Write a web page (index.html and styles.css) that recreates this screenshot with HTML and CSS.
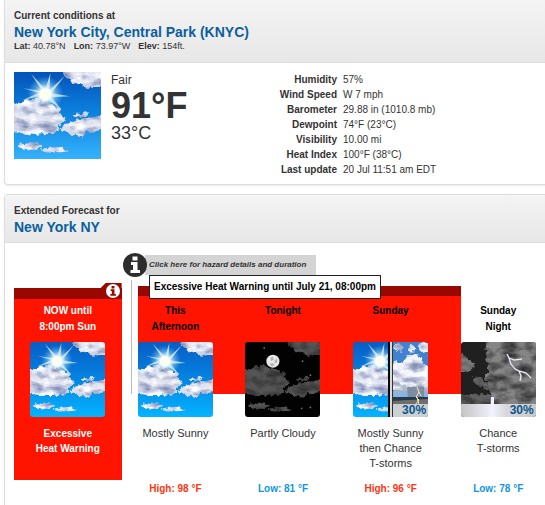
FILE: index.html
```html
<!DOCTYPE html>
<html lang="en">
<head>
<meta charset="utf-8">
<title>New York Weather Forecast</title>
<link rel="stylesheet" href="styles.css">
</head>
<body>
<svg class="defs" aria-hidden="true">
  <defs>
    <linearGradient id="sky" x1="0" y1="0" x2="0" y2="1">
      <stop offset="0" stop-color="#0353b8"/>
      <stop offset="0.45" stop-color="#0b7fdd"/>
      <stop offset="1" stop-color="#35b2fb"/>
    </linearGradient>
    <linearGradient id="sky-bright" x1="0" y1="0" x2="0" y2="1">
      <stop offset="0" stop-color="#0a5cc4"/>
      <stop offset="0.5" stop-color="#0385e3"/>
      <stop offset="1" stop-color="#04b4ff"/>
    </linearGradient>
    <linearGradient id="cloud-day" x1="0" y1="0" x2="0" y2="1">
      <stop offset="0" stop-color="#e2e8f6"/>
      <stop offset="0.5" stop-color="#dde2f0"/>
      <stop offset="0.85" stop-color="#d2d8ea"/>
      <stop offset="1" stop-color="#e4e8f4"/>
    </linearGradient>
    <radialGradient id="glow">
      <stop offset="0" stop-color="#fffff0"/>
      <stop offset="0.35" stop-color="#f2fbf0" stop-opacity="0.9"/>
      <stop offset="0.6" stop-color="#a9dcf5" stop-opacity="0.5"/>
      <stop offset="1" stop-color="#6dbdf0" stop-opacity="0"/>
    </radialGradient>
    <linearGradient id="mist" x1="0" x2="1">
      <stop offset="0" stop-color="#c4c4c4"/>
      <stop offset="0.42" stop-color="#f1f1fb"/>
      <stop offset="0.6" stop-color="#d8d8dc"/>
      <stop offset="1" stop-color="#c6c8ca"/>
    </linearGradient>
    <filter id="fluff" x="-5%" y="-5%" width="110%" height="110%" color-interpolation-filters="sRGB">
      <feTurbulence type="fractalNoise" baseFrequency="0.07 0.14" numOctaves="3" seed="4" result="n"/>
      <feTurbulence type="fractalNoise" baseFrequency="0.2" numOctaves="2" seed="9" result="edge"/>
      <feDisplacementMap in="SourceGraphic" in2="edge" scale="7" xChannelSelector="R" yChannelSelector="G" result="d"/>
      <feColorMatrix in="n" type="matrix" values="0 0 0 0 0.52  0 0 0 0 0.56  0 0 0 0 0.72  2.4 0 0 0 -0.95" result="s"/>
      <feComposite in="s" in2="d" operator="in" result="shade"/>
      <feColorMatrix in="n" type="matrix" values="0 0 0 0 1  0 0 0 0 1  0 0 0 0 1  0 3 0 0 -1.4" result="h"/>
      <feComposite in="h" in2="d" operator="in" result="light"/>
      <feMerge><feMergeNode in="d"/><feMergeNode in="shade"/><feMergeNode in="light"/></feMerge>
    </filter>
    <filter id="fluff-dark" x="-5%" y="-5%" width="110%" height="110%" color-interpolation-filters="sRGB">
      <feTurbulence type="fractalNoise" baseFrequency="0.07 0.12" numOctaves="3" seed="4" result="n"/>
      <feTurbulence type="fractalNoise" baseFrequency="0.2" numOctaves="2" seed="9" result="edge"/>
      <feDisplacementMap in="SourceGraphic" in2="edge" scale="7" xChannelSelector="R" yChannelSelector="G" result="d"/>
      <feColorMatrix in="n" type="matrix" values="0 0 0 0 0.18  0 0 0 0 0.18  0 0 0 0 0.18  2 0 0 0 -0.7" result="s"/>
      <feComposite in="s" in2="d" operator="in" result="shade"/>
      <feMerge><feMergeNode in="d"/><feMergeNode in="shade"/></feMerge>
    </filter>
    <g id="cloud-shapes">
      <path d="M48 0Q50 5 56 7Q59 13 65 12Q71 17 77 15Q82 17 88 14V-3H48Z"/>
      <path d="M-3 34Q3 33 5 30Q9 31 11 28Q16 24 20 28Q26 26 29 31Q35 30 39 33Q44 32 46 38L43 41Q50 42 50 48Q48 53 43 54Q46 60 39 60Q33 62 29 61Q20 63 14 61Q6 61 -3 58Z"/>
      <path d="M44 55Q49 54 53 51Q59 50 63 47Q69 49 73 45Q79 46 89 41V57Q81 58 78 60Q72 58 70 62Q65 66 61 62Q54 63 52 59Z"/>
      <path d="M59 43Q62 39 67 41Q70 37 74 40Q71 45 65 44Q62 46 59 43Z"/>
      <path d="M3 72Q8 69 14 71Q22 69 28 72Q26 75 21 76Q17 79 12 77Q6 77 3 72Z"/>
      <path d="M25 77Q31 75 37 75Q45 73 54 78Q47 80 41 79Q33 81 25 77Z"/>
    </g>
    <g id="sun">
      <circle cx="31" cy="22" r="18" fill="url(#glow)"/>
      <path d="M30 22L9 16L28 19L17 2L31 17L36 1L35 18L50 4L37 21L55 24L37 25L47 37L33 27L29 41L27 27L16 38L24 24L8 28L24 21Z" fill="#d7f1fb" opacity="0.8"/>
      <circle cx="31" cy="22" r="6" fill="#fffff1"/>
    </g>
    <symbol id="sunny" viewBox="0 0 86 86">
      <use href="#sun"/>
      <use href="#cloud-shapes" fill="url(#cloud-day)" filter="url(#fluff)"/>
    </symbol>
    <symbol id="info" viewBox="0 0 24 24">
      <circle cx="12" cy="12" r="12" class="info-disc"/>
      <path class="info-mark" d="M9.500 3.500h5v4h-5zM8 9h6.500v8H17v3H7.500v-3H10v-5H8z"/>
    </symbol>
  </defs>
</svg>

<section class="panel">
  <header class="panel-head panel-head-first">
    <p class="eyebrow">Current conditions at</p>
    <h2 class="title">New York City, Central Park (KNYC)</h2>
    <p class="coords"><span><b>Lat:</b> 40.78°N</span><span><b>Lon:</b> 73.97°W</span><span><b>Elev:</b> 154ft.</span></p>
  </header>
  <div class="current">
    <svg class="current-art" viewBox="0 0 86 86" role="img" aria-label="Fair">
      <rect width="86" height="86" fill="url(#sky)"/>
      <use href="#sunny" width="86" height="86"/>
    </svg>
    <div class="reading">
      <p class="sky">Fair</p>
      <p class="temp-f">91°F</p>
      <p class="temp-c">33°C</p>
    </div>
    <table class="details">
      <tr><th scope="row">Humidity</th><td>57%</td></tr>
      <tr><th scope="row">Wind Speed</th><td>W 7 mph</td></tr>
      <tr><th scope="row">Barometer</th><td>29.88 in (1010.8 mb)</td></tr>
      <tr><th scope="row">Dewpoint</th><td>74°F (23°C)</td></tr>
      <tr><th scope="row">Visibility</th><td>10.00 mi</td></tr>
      <tr><th scope="row">Heat Index</th><td>100°F (38°C)</td></tr>
      <tr><th scope="row">Last update</th><td>20 Jul 11:51 am EDT</td></tr>
    </table>
  </div>
</section>

<section class="panel panel-forecast">
  <header class="panel-head">
    <p class="eyebrow">Extended Forecast for</p>
    <h2 class="title">New York NY</h2>
  </header>
  <div class="hazard-bar">
    <a class="hazard-link" href="#hazards">
      <svg class="info-large"><use href="#info"/></svg>
      <span class="hazard-text">Click here for hazard details and duration</span>
    </a>
    <div class="tip" role="tooltip">Excessive Heat Warning until July 21, 08:00pm</div>
  </div>
  <div class="forecast">
    <div class="band"></div>
    <a class="period hazard" id="hazards" href="#hazards">
      <span class="tab"><svg class="info-small"><use href="#info"/></svg></span>
      <span class="name">NOW until<br>8:00pm Sun</span>
      <svg class="art" viewBox="0 0 86 86">
        <rect width="86" height="86" fill="url(#sky-bright)"/>
        <use href="#sunny" width="86" height="86"/>
      </svg>
      <span class="desc">Excessive<br>Heat Warning</span>
    </a>
    <div class="period p1">
      <h3 class="name">This<br>Afternoon</h3>
      <svg class="art" viewBox="0 0 86 86">
        <rect width="86" height="86" fill="url(#sky-bright)"/>
        <use href="#sunny" width="86" height="86"/>
      </svg>
      <p class="desc">Mostly Sunny</p>
      <p class="temp high">High: 98 °F</p>
    </div>
    <div class="period p2">
      <h3 class="name">Tonight</h3>
      <svg class="art" viewBox="0 0 86 86">
        <rect width="86" height="86" fill="#020202"/>
        <g fill="#777"><circle cx="22" cy="7" r="1"/><circle cx="66" cy="22" r="1"/><circle cx="75" cy="38" r="1"/><circle cx="65" cy="76" r="1"/><circle cx="75" cy="75" r="1"/></g>
        <circle cx="32" cy="22" r="7.500" fill="#e8e8e8"/>
        <path d="M29 18l3-1 1 3-3 2zM34 21l3-2v4l-3 2zM28 25l4-1 2 3-4 1z" fill="#b3b3b3"/>
        <use href="#cloud-shapes" fill="#555" filter="url(#fluff-dark)"/>
      </svg>
      <p class="desc">Partly Cloudy</p>
      <p class="temp low">Low: 81 °F</p>
    </div>
    <div class="period p3">
      <h3 class="name">Sunday</h3>
      <div class="art-wrap">
        <svg class="art" viewBox="0 0 75 75">
          <rect width="36" height="75" fill="url(#sky-bright)"/>
          <svg width="36" height="75" viewBox="0 0 36 75"><use href="#sunny" width="75" height="75"/></svg>
          <rect x="39" width="36" height="75" fill="#3f82cf"/>
          <g filter="url(#fluff)">
            <path fill="#f3f5fa" d="M38 25Q44 18 50 21Q52 11 61 13Q70 14 70 23Q77 22 78 30V49H38Z"/>
            <path fill="#dce5f3" d="M42 1Q49 2 52 7Q47 12 41 7ZM65 2Q74 -1 78 6Q76 14 68 9ZM56 4Q62 2 62 8Q59 11 55 8Z"/>
            <path fill="#aeb9c9" d="M38 43Q47 40 55 45Q66 42 78 45V50H38Z"/>
          </g>
          <rect x="39" y="49" width="36" height="6" fill="#8fb4dc"/>
          <path d="M54 45H71V57H55Z" fill="#758595" opacity="0.8"/>
          <path d="M39 55H75V59L57 58L39 60Z" fill="#233a50"/>
          <path d="M39 59L75 57V75H39Z" fill="#716d69"/>
          <path d="M64 45L66 50L63 55L66 58L62 63M66 50L68 54M64 55L66 63" fill="none" stroke="#ffe7b1" stroke-width="1"/>
          <rect x="35" width="2" height="75" fill="#080808"/>
          <rect x="37" width="2" height="75" fill="#d9d9d5"/>
          <rect x="39" width="1" height="75" fill="#333"/>
          <rect x="40" y="62" width="35" height="13" fill="#cbd0d3"/>
        </svg>
        <span class="chance">30%</span>
      </div>
      <p class="desc">Mostly Sunny<br>then Chance<br>T-storms</p>
      <p class="temp high">High: 96 °F</p>
    </div>
    <div class="period p4">
      <h3 class="name">Sunday<br>Night</h3>
      <div class="art-wrap">
        <svg class="art" viewBox="0 0 75 75">
          <rect width="75" height="75" fill="#202020"/>
          <g filter="url(#fluff-dark)">
            <path fill="#7a7a7a" d="M-3 13Q5 12 7 18Q14 20 12 27Q5 31 -3 30Z"/>
            <path fill="#858585" d="M24 -4Q27 4 23 7Q29 11 25 18Q29 26 26 30Q21 37 26 40Q19 46 29 50L34 63H80V-4Z"/>
            <path fill="#626262" d="M-4 56Q8 48 17 53Q25 49 31 55L42 64H-4ZM10 38Q14 32 21 36L26 44Q17 48 10 38Z"/>
          </g>
          <path d="M46 12L48 16L50 22L54 27L58 29L60 34L59 39M48 16L53 18L61 17M58 29L65 31L70 36" fill="none" stroke="#b4b4c4" stroke-width="2" opacity="0.6"/>
          <path d="M46 12L48 16L50 22L54 27L58 29L60 34L59 39M48 16L53 18L61 17M58 29L65 31L70 36" fill="none" stroke="#f4f4ff"/>
          <rect y="62" width="75" height="13" fill="url(#mist)"/>
          <path d="M30 55H33V75H29Z" fill="#f1f1ff"/>
        </svg>
        <span class="chance">30%</span>
      </div>
      <p class="desc">Chance<br>T-storms</p>
      <p class="temp low">Low: 78 °F</p>
    </div>
  </div>
</section>
</body>
</html>
```

FILE: styles.css
```css
* { box-sizing: border-box; }

body {
  margin: 0;
  overflow-x: hidden;
  background: #fff;
  color: #333;
  font-family: "Liberation Sans", Arial, sans-serif;
  font-size: 10px;
  line-height: 15px;
}

p, h2, h3 { margin: 0; font-size: inherit; }
a { color: inherit; text-decoration: none; }
.defs { position: absolute; width: 0; height: 0; }

.panel {
  margin: 0 -8px 9px 4px;
  border: 1px solid #ddd;
  border-radius: 4px;
  box-shadow: 0 1px 2px rgba(0, 0, 0, 0.08);
}
.panel:first-of-type { border-top: 0; border-radius: 0 0 4px 4px; }
.panel-forecast { margin-bottom: 0; border-bottom: 0; border-radius: 4px 4px 0 0; }

.panel-head {
  padding: 8px 9px 7px;
  border-bottom: 1px solid #ddd;
  background: linear-gradient(#f4f4f4, #e7e7e7);
}
.panel-head-first { padding-bottom: 9px; }
.eyebrow { font-weight: bold; line-height: 16px; }
.title { color: #0b5f9e; font-size: 14px; line-height: 16px; }
.coords { display: flex; gap: 8px; font-size: 9px; line-height: 13px; }

.current { display: flex; align-items: flex-start; padding: 9px 9px 7px; }
.current-art { width: 87px; height: 87px; }
.reading { width: 168px; margin-left: 10px; }
.sky { font-size: 12px; line-height: 16px; }
.temp-f { font-size: 36px; font-weight: bold; line-height: 36px; }
.temp-c { font-size: 18px; line-height: 18px; }

.details { border-collapse: collapse; }
.details th, .details td { padding: 0; line-height: 15px; }
.details th { width: 64px; padding-right: 6px; text-align: right; white-space: nowrap; }

.hazard-bar { position: relative; padding: 10px 0 3px 118px; }
.hazard-link { display: flex; align-items: center; width: max-content; }
.info-large { width: 24px; height: 24px; margin-right: -2px; z-index: 1; }
.hazard-text {
  padding: 0 10px 0 4px;
  background: #d4d4d4;
  font-size: 8px;
  font-style: italic;
  font-weight: bold;
  line-height: 20px;
}
.tip {
  position: absolute;
  top: 32px;
  left: 144px;
  z-index: 3;
  padding: 0 4px;
  border: 1px solid #222;
  background: #fff;
  color: #000;
  font-weight: bold;
  line-height: 22px;
  white-space: nowrap;
}

.forecast {
  display: grid;
  grid-template-columns: repeat(5, 1fr);
  padding-left: 9px;
}
.period {
  grid-row: 1;
  z-index: 1;
  padding: 23px 0 9px;
  text-align: center;
}
.p1 { grid-column: 2; }
.p2 { grid-column: 3; }
.p3 { grid-column: 4; }
.p4 { grid-column: 5; }

.band {
  position: relative;
  grid-row: 1;
  grid-column: 2 / 5;
  height: 108px;
  margin: 6px -17px 0 16px;
  border-top: 10px solid #980800;
  background: #ff1400;
}
.band::before {
  content: "";
  position: absolute;
  top: -16px;
  bottom: 0;
  left: -7px;
  width: 1px;
  background: #bbb;
}

.hazard {
  position: relative;
  grid-column: 1;
  align-self: start;
  height: 192px;
  margin-top: 8px;
  padding: 4px 0 0;
  border-top: 11px solid #980800;
  background: #ff1400;
  color: #fff;
}
.tab {
  position: absolute;
  top: -16px;
  right: 0;
  display: flex;
  justify-content: flex-end;
  width: 22px;
  height: 16px;
  padding: 1px 2px;
  background: #980800;
  clip-path: polygon(6px 0, 100% 0, 100% 100%, 0 100%, 0 6px);
}
.info-small { width: 14px; height: 14px; }
.tab use { --disc: #fff; --mark: #980800; }
.info-disc { fill: var(--disc, #2d2d2d); }
.info-mark { fill: var(--mark, #fff); }

.name {
  display: block;
  height: 32px;
  margin-bottom: 7px;
  color: #000;
  font-weight: bold;
  line-height: 16px;
}
.hazard .name { color: #fff; }
.art { display: block; width: 75px; height: 75px; margin: 0 auto; border-radius: 3px; }
.art-wrap { position: relative; width: 75px; margin: 0 auto; }
.chance {
  position: absolute;
  right: 2px;
  bottom: 0;
  color: #0b558c;
  font-size: 12px;
  font-weight: bold;
  line-height: 13px;
}
.desc { display: block; min-height: 45px; margin-top: 9px; }
p.desc { font-size: 11px; }
.hazard .desc { font-weight: bold; }
.temp { margin-top: 10px; font-weight: bold; }
.high { color: #ff3512; }
.low { color: #0e96e5; }
```
